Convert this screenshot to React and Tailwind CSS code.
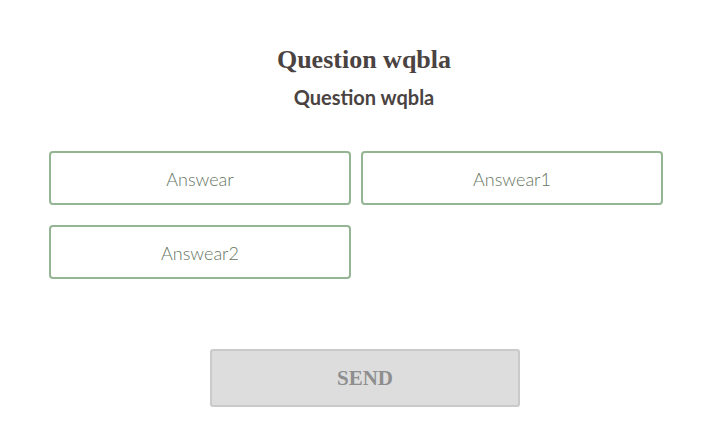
export default function App() {
  const answers = ['Answear', 'Answear1', 'Answear2']
  return (
    <div className="min-h-[434px] w-full bg-white">
      <div className="pl-[7px] pt-[44px] text-center">
        <h1 className="font-['Liberation_Serif',serif] text-[26px] font-bold leading-[32px] text-[#4a4341]">
          Question wqbla
        </h1>
        <h2 className="mt-[9px] font-['Lato',sans-serif] text-[20px] font-bold leading-[24px] text-[#4a4341]">
          Question wqbla
        </h2>
      </div>
      <div className="ml-[49px] mt-[42px] grid w-[614px] grid-cols-2 gap-x-[10px] gap-y-[20px]">
        {answers.map((a) => (
          <button
            key={a}
            className="flex h-[54px] items-center justify-center rounded-[4px] border-2 border-[#93b593] bg-white pt-[3px] font-['Lato',sans-serif] text-[18px] font-light text-[#66755f]"
          >
            {a}
          </button>
        ))}
      </div>
      <div className="mt-[70px] flex justify-center pl-[9px]">
        <button className="h-[58px] w-[310px] rounded-[3px] border-2 border-[#cacaca] bg-[#dddddd] pt-[2px] font-['Liberation_Serif',serif] text-[21px] font-bold text-[#8e8e8e]">
          SEND
        </button>
      </div>
    </div>
  )
}
